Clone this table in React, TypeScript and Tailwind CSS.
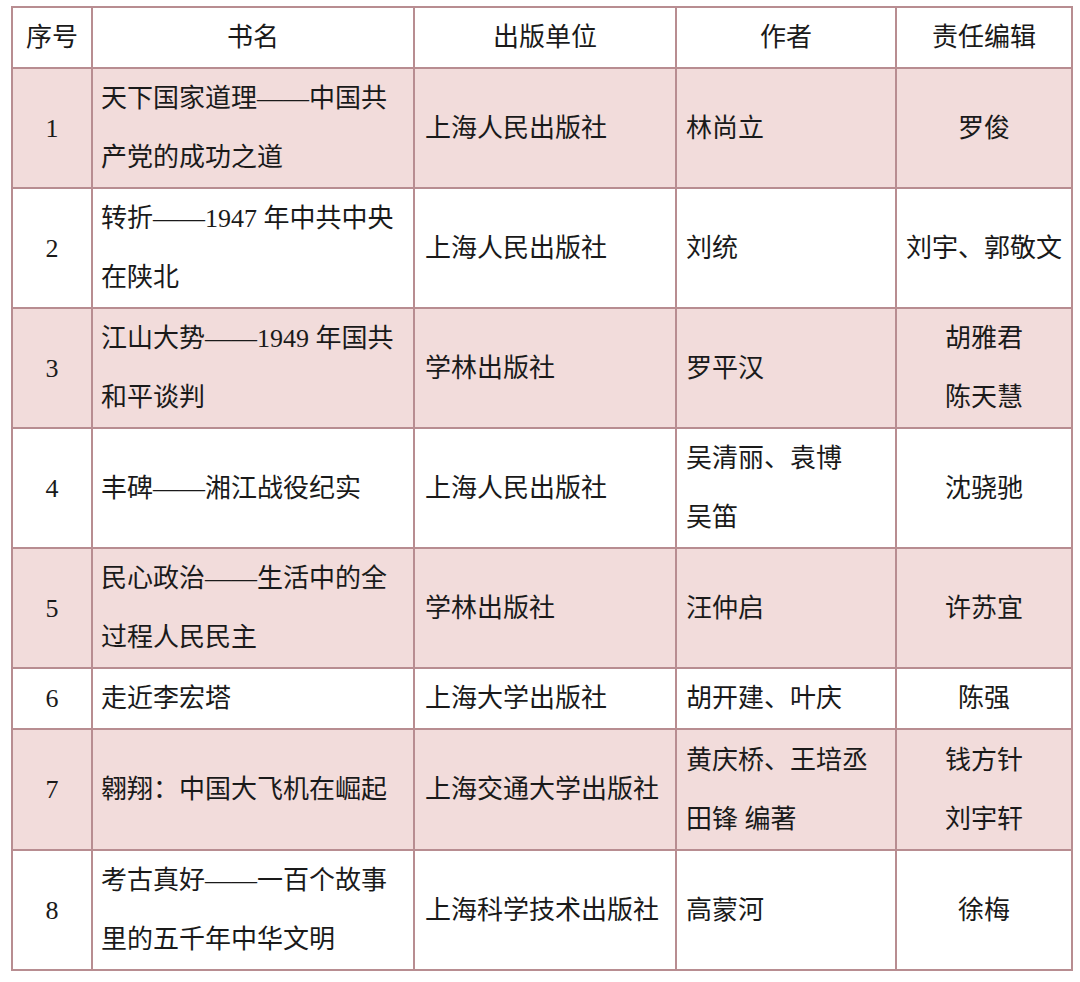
type Row = {
	no: string;
	title: string[];
	publisher: string;
	author: string[];
	editor: string[];
	shaded: boolean;
	h: string;
};

const rows: Row[] = [
	{ no: "1", title: ["天下国家道理——中国共", "产党的成功之道"], publisher: "上海人民出版社", author: ["林尚立"], editor: ["罗俊"], shaded: true, h: "h-[120px]" },
	{ no: "2", title: ["转折——1947 年中共中央", "在陕北"], publisher: "上海人民出版社", author: ["刘统"], editor: ["刘宇、郭敬文"], shaded: false, h: "h-[120px]" },
	{ no: "3", title: ["江山大势——1949 年国共", "和平谈判"], publisher: "学林出版社", author: ["罗平汉"], editor: ["胡雅君", "陈天慧"], shaded: true, h: "h-[120px]" },
	{ no: "4", title: ["丰碑——湘江战役纪实"], publisher: "上海人民出版社", author: ["吴清丽、袁博", "吴笛"], editor: ["沈骁驰"], shaded: false, h: "h-[120px]" },
	{ no: "5", title: ["民心政治——生活中的全", "过程人民民主"], publisher: "学林出版社", author: ["汪仲启"], editor: ["许苏宜"], shaded: true, h: "h-[120px]" },
	{ no: "6", title: ["走近李宏塔"], publisher: "上海大学出版社", author: ["胡开建、叶庆"], editor: ["陈强"], shaded: false, h: "h-[61px]" },
	{ no: "7", title: ["翱翔：中国大飞机在崛起"], publisher: "上海交通大学出版社", author: ["黄庆桥、王培丞", "田锋 编著"], editor: ["钱方针", "刘宇轩"], shaded: true, h: "h-[121px]" },
	{ no: "8", title: ["考古真好——一百个故事", "里的五千年中华文明"], publisher: "上海科学技术出版社", author: ["高蒙河"], editor: ["徐梅"], shaded: false, h: "h-[119px]" },
];

const cell = "border-2 border-[#b88d91] p-0 align-middle leading-[59px] whitespace-nowrap";

function Lines({ lines }: { lines: string[] }) {
	return (
		<>
			{lines.map((l, i) => (
				<div key={i} className="h-[59px] overflow-visible">
					{l}
				</div>
			))}
		</>
	);
}

export default function App() {
	return (
		<div className="min-h-[982px] w-[1080px] bg-white pt-[6px] pl-[11px] font-['Liberation_Serif','Noto_Sans_CJK_SC',serif] text-[26px] text-[#1a1a1a]">
			<table className="w-[1060px] table-fixed border-collapse">
				<colgroup>
					<col className="w-[80px]" />
					<col className="w-[322px]" />
					<col className="w-[262px]" />
					<col className="w-[220px]" />
					<col className="w-[176px]" />
				</colgroup>
				<thead>
					<tr className="h-[61px] bg-white">
						<th className={`${cell} text-center font-normal`}>
							<Lines lines={["序号"]} />
						</th>
						<th className={`${cell} text-center font-normal`}>
							<Lines lines={["书名"]} />
						</th>
						<th className={`${cell} text-center font-normal`}>
							<Lines lines={["出版单位"]} />
						</th>
						<th className={`${cell} text-center font-normal`}>
							<Lines lines={["作者"]} />
						</th>
						<th className={`${cell} text-center font-normal`}>
							<Lines lines={["责任编辑"]} />
						</th>
					</tr>
				</thead>
				<tbody>
					{rows.map((r) => (
						<tr key={r.no} className={`${r.h} ${r.shaded ? "bg-[#f2dcdb]" : "bg-white"}`}>
							<td className={`${cell} text-center`}>
								<Lines lines={[r.no]} />
							</td>
							<td className={`${cell} pl-[8px]`}>
								<Lines lines={r.title} />
							</td>
							<td className={`${cell} pl-[10px]`}>
								<Lines lines={[r.publisher]} />
							</td>
							<td className={`${cell} pl-[9px]`}>
								<Lines lines={r.author} />
							</td>
							<td className={`${cell} text-center`}>
								<Lines lines={r.editor} />
							</td>
						</tr>
					))}
				</tbody>
			</table>
		</div>
	);
}
